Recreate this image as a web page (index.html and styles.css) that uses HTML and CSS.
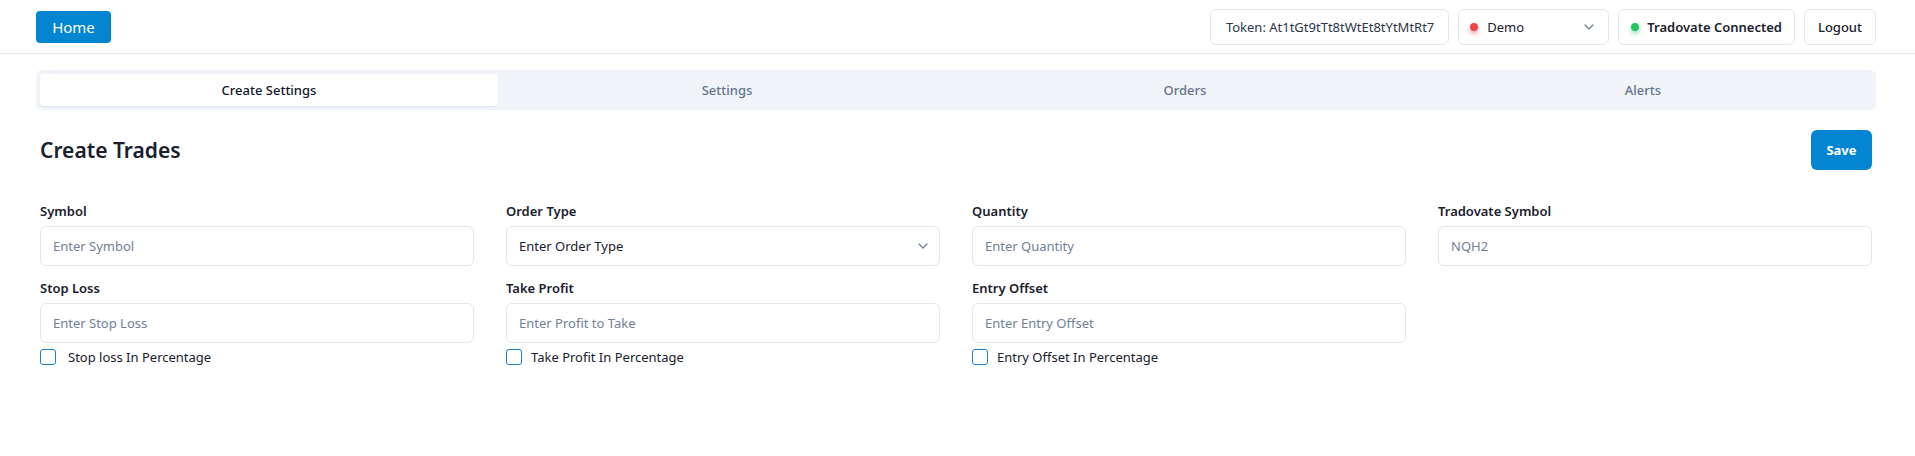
FILE: index.html
```html
<!DOCTYPE html>
<html lang="en">
<head>
<meta charset="utf-8">
<title>Create Trades</title>
<link rel="stylesheet" href="styles.css">
</head>
<body>
<header class="topbar">
  <button class="btn-primary btn-home" type="button">Home</button>
  <div class="topbar-right">
    <div class="chip chip-token">Token: At1tGt9tTt8tWtEt8tYtMtRt7</div>
    <div class="chip chip-env">
      <span class="dot dot-red"></span>
      <span class="env-label">Demo</span>
      <svg class="chev" width="10" height="6" viewBox="0 0 10 6"><path d="M1 1l4 4 4-4" fill="none" stroke="#718096" stroke-width="1.3" stroke-linecap="round" stroke-linejoin="round"/></svg>
    </div>
    <div class="chip chip-status"><span class="dot dot-green"></span><span>Tradovate Connected</span></div>
    <button class="chip chip-logout" type="button">Logout</button>
  </div>
</header>

<main class="page">
  <nav class="tabs">
    <div class="tab tab-active">Create Settings</div>
    <div class="tab">Settings</div>
    <div class="tab">Orders</div>
    <div class="tab">Alerts</div>
  </nav>

  <section class="content">
    <div class="title-row">
      <h1 class="title">Create Trades</h1>
      <button class="btn-primary btn-save" type="button">Save</button>
    </div>

    <div class="form-grid">
      <div class="field">
        <label class="field-label">Symbol</label>
        <input class="input" placeholder="Enter Symbol">
      </div>
      <div class="field">
        <label class="field-label">Order Type</label>
        <div class="select-wrap">
          <div class="input select">Enter Order Type</div>
          <svg class="select-chev" width="10" height="6" viewBox="0 0 10 6"><path d="M1 1l4 4 4-4" fill="none" stroke="#718096" stroke-width="1.3" stroke-linecap="round" stroke-linejoin="round"/></svg>
        </div>
      </div>
      <div class="field">
        <label class="field-label">Quantity</label>
        <input class="input" placeholder="Enter Quantity">
      </div>
      <div class="field">
        <label class="field-label">Tradovate Symbol</label>
        <input class="input" placeholder="NQH2">
      </div>

      <div class="field">
        <label class="field-label">Stop Loss</label>
        <input class="input" placeholder="Enter Stop Loss">
        <label class="check"><span class="box"></span><span class="check-text check-text-wide">Stop loss In Percentage</span></label>
      </div>
      <div class="field">
        <label class="field-label">Take Profit</label>
        <input class="input" placeholder="Enter Profit to Take">
        <label class="check"><span class="box"></span><span class="check-text">Take Profit In Percentage</span></label>
      </div>
      <div class="field">
        <label class="field-label">Entry Offset</label>
        <input class="input" placeholder="Enter Entry Offset">
        <label class="check"><span class="box"></span><span class="check-text">Entry Offset In Percentage</span></label>
      </div>
    </div>
  </section>
</main>
</body>
</html>
```

FILE: styles.css
```css
* { box-sizing: border-box; }

html, body {
  margin: 0;
  padding: 0;
  background: #ffffff;
  font-family: "Noto Sans", "Open Sans", sans-serif;
  color: #1a202c;
}

button {
  font-family: inherit;
  cursor: pointer;
}

/* ---------- top bar ---------- */
.topbar {
  height: 54px;
  display: flex;
  align-items: center;
  justify-content: space-between;
  padding: 0 39px 0 36px;
  border-bottom: 1px solid #e2e8f0;
}

.btn-primary {
  background: #0385d1;
  color: #ffffff;
  border: none;
  border-radius: 4px;
}

.btn-home {
  height: 32px;
  width: 75px;
  font-size: 15px;
  padding: 0;
}

.topbar-right {
  display: flex;
  align-items: center;
  gap: 9px;
}

.chip {
  height: 36px;
  display: flex;
  align-items: center;
  padding: 0 12px;
  border: 1px solid #e2e8f0;
  border-radius: 6px;
  background: #ffffff;
  font-size: 13px;
  color: #1a202c;
}

.chip-token {
  color: #2d3748;
  padding: 0 14px 0 15px;
}

.chip-env {
  width: 151px;
  gap: 9px;
  padding: 0 14px 0 11px;
}

.env-label { flex: 1; }

.dot {
  width: 8px;
  height: 8px;
  border-radius: 50%;
  flex: none;
}

.dot-red {
  background: #ef4444;
  box-shadow: 0 3px 4px rgba(239, 68, 68, 0.45);
}

.dot-green {
  background: #22c55e;
  box-shadow: 0 3px 4px rgba(34, 197, 94, 0.45);
}

.chip-status {
  gap: 8px;
  font-weight: 600;
}

.chip-logout {
  font-weight: 500;
  padding: 0 13px;
}

/* ---------- page ---------- */
.page {
  padding: 16px 39px 0 36px;
}

.tabs {
  display: grid;
  grid-template-columns: repeat(4, 1fr);
  padding: 4px;
  background: #f1f5f9;
  border-radius: 6px;
}

.tab {
  height: 32px;
  display: flex;
  align-items: center;
  justify-content: center;
  font-size: 13px;
  font-weight: 500;
  color: #64748b;
  border-radius: 4px;
}

.tab-active {
  background: #ffffff;
  color: #0f172a;
  box-shadow: 0 1px 2px rgba(15, 23, 42, 0.08);
}

.content {
  padding: 0 4px;
}

.title-row {
  display: flex;
  align-items: center;
  justify-content: space-between;
  margin-top: 20px;
}

.title {
  margin: 0;
  font-size: 21px;
  font-weight: 600;
  color: #1a202c;
}

.btn-save {
  height: 40px;
  width: 61px;
  font-size: 13px;
  font-weight: 700;
  border-radius: 6px;
  padding: 0;
}

/* ---------- form ---------- */
.form-grid {
  display: grid;
  grid-template-columns: repeat(4, 1fr);
  column-gap: 32px;
  row-gap: 12px;
  margin-top: 31px;
}

.field {
  display: flex;
  flex-direction: column;
}

.field-label {
  font-size: 13px;
  line-height: 20px;
  font-weight: 600;
  color: #1a202c;
  margin-bottom: 5px;
}

.input {
  height: 40px;
  width: 100%;
  border: 1px solid #e2e8f0;
  border-radius: 6px;
  padding: 0 12px;
  font-family: inherit;
  font-size: 13px;
  color: #1a202c;
  background: #ffffff;
  outline: none;
}

.input::placeholder {
  color: #718096;
}

.select-wrap {
  position: relative;
}

.select {
  display: flex;
  align-items: center;
}

.select-chev {
  position: absolute;
  right: 12px;
  top: 17px;
}

.check {
  display: flex;
  align-items: center;
  gap: 9px;
  margin-top: 4px;
  height: 20px;
  font-size: 13px;
  color: #1a202c;
}

.box {
  width: 16px;
  height: 16px;
  border: 1.5px solid #1b7fce;
  border-radius: 3px;
  flex: none;
}

.check-text-wide {
  padding-left: 3px;
}
```
